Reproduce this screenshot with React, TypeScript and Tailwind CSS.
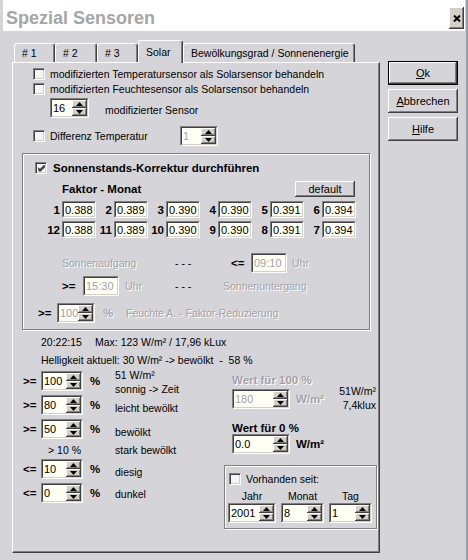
import React from 'react'

const dis = "text-[#a3a3a8] [text-shadow:1px_1px_0_#ffffff]"
const raised = "shadow-[inset_-1px_-1px_0_#404040,inset_1px_1px_0_#ffffff,inset_-2px_-2px_0_#808080]"
const etched = "border border-[#808080] shadow-[inset_1px_1px_0_#ffffff,1px_1px_0_#ffffff]"

function Sunken({ className = '', children }: { className?: string; children?: React.ReactNode }) {
  return (
    <div className={`shrink-0 border border-t-[#808080] border-l-[#808080] border-r-white border-b-white ${className}`}>
      <div className="flex h-full w-full border border-t-[#404040] border-l-[#404040] border-r-[#d4d0c8] border-b-[#d4d0c8] bg-[#fefef2]">
        {children}
      </div>
    </div>
  )
}

function Field({ value, className = '', off }: { value: string; className?: string; off?: boolean }) {
  return (
    <Sunken className={className}>
      <span className={`flex items-center pl-[1px] text-[11px] ${off ? dis : ''}`}>{value}</span>
    </Sunken>
  )
}

function SpinHalf({ up }: { up?: boolean }) {
  return (
    <div className={`flex h-[8px] items-center justify-center bg-[#d4d0c8] ${raised}`}>
      <svg width="7" height="4" viewBox="0 0 7 4">
        <polygon points={up ? '3.5,0 7,4 0,4' : '0,0 7,0 3.5,4'} fill="#000" />
      </svg>
    </div>
  )
}

function Spin({ value, className = '', off }: { value: string; className?: string; off?: boolean }) {
  return (
    <Sunken className={`h-[20px] ${className}`}>
      <span className={`flex-1 overflow-hidden pl-[1px] text-[11px] leading-[16px] ${off ? dis : ''}`}>{value}</span>
      <div className="flex w-[15px] flex-col">
        <SpinHalf up />
        <SpinHalf />
      </div>
    </Sunken>
  )
}

function Check({ checked }: { checked?: boolean }) {
  return (
    <span className="inline-flex h-[12px] w-[12px] shrink-0 items-center justify-center border border-t-[#808080] border-l-[#808080] border-r-white border-b-white bg-[#f4f4f4] shadow-[inset_1px_1px_0_#404040,inset_-1px_-1px_0_#d4d0c8]">
      {checked && (
        <svg width="7" height="7" viewBox="0 0 7 7">
          <path d="M0 2.5 L2 4.5 L7 -0.5 M0 3.5 L2 5.5 L7 0.5 M0 4.5 L2 6.5 L7 1.5" stroke="#000" strokeWidth="1" fill="none" />
        </svg>
      )}
    </span>
  )
}

function Btn({ children, def, className = '' }: { children: React.ReactNode; def?: boolean; className?: string }) {
  return (
    <div className={`shrink-0 ${def ? 'border border-black' : ''} ${className}`}>
      <div className={`flex h-full w-full items-center justify-center text-[11px] ${raised}`}>{children}</div>
    </div>
  )
}

function Tab({ label, w, active }: { label: string; w: string; active?: boolean }) {
  return (
    <div
      className={`flex items-center whitespace-nowrap rounded-t-[3px] border-l border-t border-r border-white border-r-[#404040] pl-[7px] text-[10.5px] shadow-[inset_-1px_0_0_#808080] ${w} ${
        active ? 'relative z-10 -mb-px h-[23px] bg-[#d5d4d9]' : 'h-[19px]'
      }`}
    >
      {label}
    </div>
  )
}

const factors = [
  [
    ['1', '0.388'],
    ['2', '0.389'],
    ['3', '0.390'],
    ['4', '0.390'],
    ['5', '0.391'],
    ['6', '0.394'],
  ],
  [
    ['12', '0.388'],
    ['11', '0.389'],
    ['10', '0.390'],
    ['9', '0.390'],
    ['8', '0.391'],
    ['7', '0.394'],
  ],
]

function LevelRow({ op, value, text, textClass = 'mt-[6px]', className = '' }: { op: string; value: string; text: React.ReactNode; textClass?: string; className?: string }) {
  return (
    <div className={`flex h-[20px] items-center ${className}`}>
      <span className="w-[18px] text-[11.5px] font-bold">{op}</span>
      <Spin value={value} className="w-[42px]" />
      <span className="ml-[7px] w-[25px] text-[11.5px] font-bold">%</span>
      <span className={textClass}>{text}</span>
    </div>
  )
}

export default function App() {
  return (
    <div className="relative h-[560px] w-[468px] overflow-hidden border-r-2 border-r-[#9c9cac] bg-[#d5d4d9] font-['Liberation_Sans',Arial,sans-serif] text-[10.5px] leading-[14px] text-black">
      {/* title bar */}
      <div className="ml-[3px] flex h-[31px] w-[462px] bg-white">
        <span className="pl-[3px] pt-[8px] text-[18px] font-bold leading-[20px] text-[#a6a6a6]">Spezial Sensoren</span>
        <div className={`ml-auto mr-[1px] mt-[7px] flex h-[22px] w-[15px] items-center justify-center bg-[#d4d0c8] ${raised}`}>
          <svg width="8" height="7" viewBox="0 0 8 7">
            <path d="M1 0.5 L7 6.5 M7 0.5 L1 6.5" stroke="#000" strokeWidth="2" />
          </svg>
        </div>
      </div>

      <div className="flex">
        {/* tabs + panel */}
        <div className="ml-[12px] mt-[9px] w-[368px]">
          <div className="flex h-[22px] items-end pl-[2px]">
            <Tab label="# 1" w="w-[41px]" />
            <Tab label="# 2" w="w-[42px]" />
            <Tab label="# 3" w="w-[41px]" />
            <Tab label="Solar" w="w-[45px]" active />
            <Tab label="Bewölkungsgrad / Sonnenenergie" w="w-[172px]" />
          </div>

          <div className="flex h-[491px] flex-col border-l border-t border-r border-b border-white border-r-[#404040] border-b-[#404040] shadow-[inset_-1px_-1px_0_#808080]">
            <div className="ml-[20px] mt-[3px] flex h-[15px] items-center gap-[5px]">
              <Check />
              <span>modifizierten Temperatursensor als Solarsensor behandeln</span>
            </div>
            <div className="ml-[20px] flex h-[16px] items-center gap-[5px]">
              <Check />
              <span>modifizierten Feuchtesensor als Solarsensor behandeln</span>
            </div>
            <div className="ml-[37px] mt-[1px] flex h-[20px] items-center">
              <Spin value="16" className="w-[39px]" />
              <span className="ml-[16px] mt-[4px]">modifizierter Sensor</span>
            </div>
            <div className="ml-[20px] mt-[8px] flex h-[20px] items-center">
              <Check />
              <span className="ml-[5px] w-[130px]">Differenz Temperatur</span>
              <Spin value="1" className="w-[38px]" off />
            </div>

            {/* Sonnenstands group */}
            <div className={`ml-[9px] mt-[7px] flex h-[177px] w-[348px] flex-col ${etched}`}>
              <div className="ml-[12px] mt-[7px] flex h-[14px] items-center">
                <Check checked />
                <span className="ml-[6px] text-[11.5px] font-bold">Sonnenstands-Korrektur durchführen</span>
              </div>
              <div className="ml-[39px] mt-[6px] flex h-[16px] items-center pr-[14px]">
                <span className="text-[11.5px] font-bold">Faktor - Monat</span>
                <Btn className="ml-auto h-[16px] w-[60px]">default</Btn>
              </div>
              {factors.map((row, i) => (
                <div key={i} className={`ml-[21px] flex ${i === 0 ? 'mt-[4px]' : 'mt-[3px]'}`}>
                  {row.map(([m, v]) => (
                    <div key={m} className="flex w-[52px] items-center">
                      <span className="w-[16px] text-right text-[11.5px] font-bold">{m}</span>
                      <Field value={v} className="ml-[2px] h-[17px] w-[34px]" />
                    </div>
                  ))}
                </div>
              ))}
              <div className="ml-[39px] mt-[15px] flex h-[20px] items-center">
                <span className={`w-[113px] ${dis}`}>Sonnenaufgang</span>
                <span className="w-[56px]">- - -</span>
                <span className="w-[20px] text-[11.5px] font-bold">&lt;=</span>
                <Field value="09:10" className="h-[20px] w-[36px]" off />
                <span className={`ml-[5px] ${dis}`}>Uhr</span>
              </div>
              <div className="ml-[39px] mt-[3px] flex h-[20px] items-center">
                <span className="w-[21px] text-[11.5px] font-bold">&gt;=</span>
                <Field value="15:30" className="h-[20px] w-[36px]" off />
                <span className={`w-[56px] pl-[6px] ${dis}`}>Uhr</span>
                <span className="w-[48px]">- - -</span>
                <span className={dis}>Sonnenuntergang</span>
              </div>
              <div className="ml-[15px] mt-[7px] flex h-[20px] items-center">
                <span className="w-[19px] text-[11.5px] font-bold">&gt;=</span>
                <Spin value="100" className="w-[38px]" off />
                <span className={`ml-[8px] w-[23px] text-[11.5px] font-bold ${dis}`}>%</span>
                <span className={dis}>Feuchte A. - Faktor-Reduzierung</span>
              </div>
            </div>

            <div className="ml-[28px] mt-[5px] flex h-[14px] items-center">
              <span className="w-[54px]">20:22:15</span>
              <span>Max: 123 W/m² / 17,96 kLux</span>
            </div>
            <div className="ml-[28px] mt-[4px] flex h-[14px] items-center whitespace-pre">
              Helligkeit aktuell: 30 W/m² -&gt; bewölkt  -  58 %
            </div>

            <div className="ml-[10px] mt-[4px] flex">
              <div className="flex w-[201px] flex-col">
                <LevelRow
                  op=">="
                  value="100"
                  textClass="-mt-[3px] self-start"
                  text={
                    <>
                      51 W/m²
                      <br />
                      sonnig -&gt; Zeit
                    </>
                  }
                />
                <LevelRow op=">=" value="80" text="leicht bewölkt" className="mt-[4px]" />
                <LevelRow op=">=" value="50" text="bewölkt" className="mt-[4px]" />
                <div className="mt-[4px] flex h-[14px] items-center">
                  <span className="w-[92px] pl-[25px]">&gt; 10 %</span>
                  <span>stark bewölkt</span>
                </div>
                <LevelRow op="<=" value="10" text="diesig" className="mt-[2px]" />
                <LevelRow op="<=" value="0" text="dunkel" className="mt-[4px]" textClass="mt-[2px]" />
              </div>

              <div className="flex w-[153px] flex-col">
                <div className={`mt-[2px] flex h-[14px] items-center pl-[8px] text-[11.5px] font-bold ${dis}`}>Wert für 100 %</div>
                <div className="mt-[2px] flex h-[20px] items-center pl-[8px]">
                  <Spin value="180" className="w-[58px]" off />
                  <span className={`ml-[6px] text-[11.5px] font-bold ${dis}`}>W/m²</span>
                  <div className="-mt-[5px] ml-auto self-start pr-[1px] text-right">
                    51W/m²
                    <br />
                    7,4klux
                  </div>
                </div>
                <div className="mt-[12px] flex h-[13px] items-center pl-[8px] text-[11.5px] font-bold">Wert für 0 %</div>
                <div className="flex h-[20px] items-center pl-[8px]">
                  <Spin value="0.0" className="w-[58px]" />
                  <span className="ml-[6px] text-[11.5px] font-bold">W/m²</span>
                </div>
                <div className={`mt-[11px] flex h-[64px] w-[153px] flex-col ${etched}`}>
                  <div className="ml-[4px] mt-[7px] flex h-[12px] items-center">
                    <Check />
                    <span className="ml-[5px]">Vorhanden seit:</span>
                  </div>
                  <div className="ml-[3px] mt-[4px] flex h-[14px] items-center gap-[5px]">
                    <span className="w-[48px] text-center">Jahr</span>
                    <span className="w-[43px] text-center">Monat</span>
                    <span className="w-[43px] text-center">Tag</span>
                  </div>
                  <div className="ml-[3px] flex gap-[5px]">
                    <Spin value="2001" className="w-[48px]" />
                    <Spin value="8" className="w-[43px]" />
                    <Spin value="1" className="w-[43px]" />
                  </div>
                </div>
              </div>
            </div>
          </div>
        </div>

        {/* buttons */}
        <div className="ml-[8px] mt-[30px] flex w-[70px] flex-col gap-[4px]">
          <Btn def className="h-[24px] w-[70px]">
            <span>
              <span className="underline">O</span>k
            </span>
          </Btn>
          <Btn className="h-[24px] w-[70px]">
            <span>
              <span className="underline">A</span>bbrechen
            </span>
          </Btn>
          <Btn className="h-[24px] w-[70px]">
            <span>
              <span className="underline">H</span>ilfe
            </span>
          </Btn>
        </div>
      </div>
    </div>
  )
}
